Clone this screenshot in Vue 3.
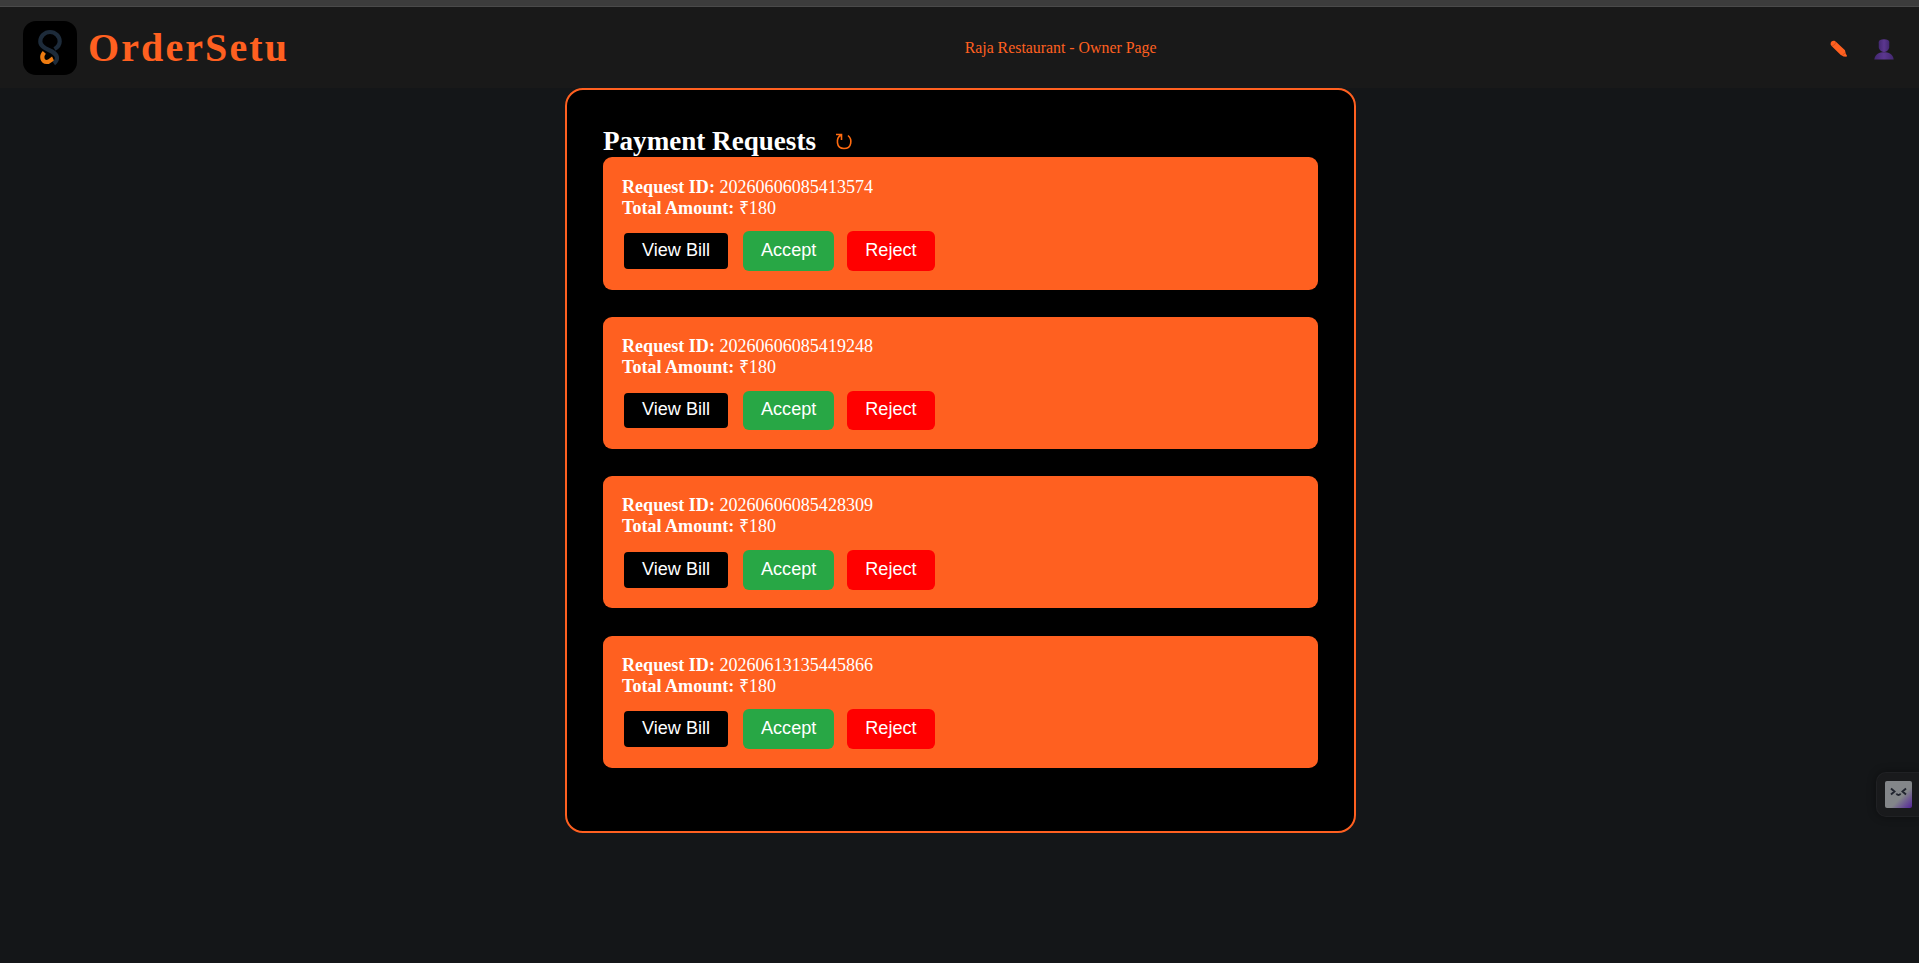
<template>
  <div class="page">
    <div class="top-strip"></div>
    <header class="navbar">
      <div class="brand">
        <svg class="logo" viewBox="0 0 54 54">
          <rect width="54" height="54" rx="13" fill="#000" />
          <path d="M31.500 28C35 26 36.700 23.500 36.700 20.500a9.700 9.500 0 1 0-19.400 0C17.300 29.500 34 28.500 34 37Q34 40 30.800 42.500" fill="none" stroke="#1d2b3a" stroke-width="4.200" />
          <path d="M21.300 31.300C17.500 35.500 19.500 41 23.500 41c3.500 0 4.500-2.500 6.500-3.500" fill="none" stroke="#ee7b10" stroke-width="4.200" />
        </svg>
        <h1>OrderSetu</h1>
      </div>
      <div class="page-name">Raja Restaurant - Owner Page</div>
      <div class="nav-icons">
        <svg class="pencil" viewBox="0 0 18 18">
          <path d="M.6 4.500Q.4 2.500 1.500 1.500T4.500.8L6.200 2 15 10.200 15.700 13.500 17 15.800 16.500 16.800 13.500 16.500 10.500 14.800 1.800 6.200Z" fill="#ff6020" />
          <path d="M2 6.200Q5.200 5 6.200 2M12.800 15.200Q13.500 13.500 15.400 12.800" fill="none" stroke="#b5431b" stroke-width=".6" />
        </svg>
        <svg class="user" viewBox="0 0 20 21">
          <defs>
            <linearGradient id="userFill" x1="0" x2="1">
              <stop offset="0" stop-color="#432871" />
              <stop offset=".5" stop-color="#5c3790" />
              <stop offset="1" stop-color="#432871" />
            </linearGradient>
          </defs>
          <path d="M4.700 3Q5 .3 10 .3T15.300 3L15.200 9Q13.500 13 10 13T4.800 9Z" fill="url(#userFill)" />
          <path d="M.3 20.500C1 15 5.500 13.300 10 13.300S19 15 19.700 20.500Z" fill="url(#userFill)" />
        </svg>
      </div>
    </header>

    <main class="panel">
      <div class="panel-title">
        <h2>Payment Requests</h2>
        <svg class="refresh" viewBox="0 0 18 18">
          <path d="M1 1.500H6.500V7M6 2C.8 5 .8 15.500 9 15.500S17.300 6 13 2.500" fill="none" stroke="#ff6b10" stroke-width="1.600" />
        </svg>
      </div>
      <section v-for="req in requests" :key="req.id" class="request">
        <div><b>Request ID:</b> {{ req.id }}</div>
        <div><b>Total Amount:</b> ₹{{ req.amount }}</div>
        <div class="actions">
          <button class="view">View Bill</button>
          <button class="accept">Accept</button>
          <button class="reject">Reject</button>
        </div>
      </section>
    </main>

    <div class="side-widget">
      <svg viewBox="0 0 27 27">
        <defs>
          <linearGradient id="faceFill" x1="0" y1="0" x2="1" y2="1">
            <stop offset=".6" stop-color="#838689" />
            <stop offset="1" stop-color="#53229a" />
          </linearGradient>
        </defs>
        <rect width="27" height="27" rx="2" fill="url(#faceFill)" />
        <path d="M6 7.500 9.500 10.500 6 13.500M21 7.500 17.500 10.500 21 13.500M11.500 12.500Q12 14 13.500 14T15.500 12.500" fill="none" stroke="#20242e" stroke-width="1.900" />
      </svg>
    </div>
  </div>
</template>

<script setup>
import { ref } from 'vue'

const requests = ref([
  { id: '20260606085413574', amount: 180 },
  { id: '20260606085419248', amount: 180 },
  { id: '20260606085428309', amount: 180 },
  { id: '20260613135445866', amount: 180 }
])
</script>

<style>
body {
  background: #141618;
}
</style>

<style scoped>
.page {
  height: 963px;
  overflow: hidden;
  font-family: "Liberation Serif", "Times New Roman", serif;
  color: #fff;
}

h1,
h2 {
  margin: 0;
}

.top-strip {
  height: 7px;
  box-sizing: border-box;
  background: #3c3c3c;
  border-bottom: 1px solid #4a4a4a;
}

.navbar {
  height: 81px;
  box-sizing: border-box;
  padding: 0 25px 0 23px;
  display: flex;
  align-items: center;
  justify-content: space-between;
  background: #191919;
  color: #ff6020;
}

.brand {
  display: flex;
  align-items: center;
  gap: 11px;
}

.logo {
  width: 54px;
  height: 54px;
}

.brand h1 {
  font-size: 40px;
  line-height: 54px;
  letter-spacing: 2.1px;
}

.page-name {
  padding: 1px 0 0 2px;
  font-size: 15.85px;
}

.nav-icons {
  display: flex;
  align-items: center;
  gap: 26px;
  padding-top: 3px;
}

.pencil {
  width: 18px;
  height: 18px;
}

.user {
  width: 20px;
  height: 21px;
}

.panel {
  width: 791px;
  height: 745px;
  box-sizing: border-box;
  margin: 0 0 0 565px;
  padding: 36px;
  background: #000;
  border: 2px solid #ff6020;
  border-radius: 18px;
}

.panel-title {
  height: 31.3px;
  display: flex;
  align-items: center;
  gap: 19px;
}

.panel-title h2 {
  font-size: 27.1px;
  line-height: 31px;
}

.refresh {
  width: 18px;
  height: 18px;
}

.request {
  height: 132.3px;
  box-sizing: border-box;
  margin-bottom: 27.15px;
  padding: 19.25px 19px;
  background: #ff6020;
  border-radius: 9px;
  font-size: 18.08px;
  line-height: 21px;
}

.actions {
  display: flex;
  align-items: center;
  gap: 13px;
  margin-top: 12.6px;
}

button {
  height: 39.7px;
  padding: 0 18px 1px;
  border: none;
  border-radius: 6px;
  font: 18.08px "Liberation Sans", Arial, sans-serif;
  color: #fff;
}

.view {
  background: #000;
  border: 2px solid #ff6020;
}

.accept {
  background: #28a745;
}

.reject {
  background: #f00;
}

.side-widget {
  position: fixed;
  right: 0;
  top: 772px;
  width: 43px;
  height: 45px;
  box-sizing: border-box;
  padding: 8px 0 0 8px;
  background: #191a1c;
  border: 1px solid #202124;
  border-right: none;
  border-radius: 10px 0 0 10px;
  box-shadow: 0 0 8px #0006;
}

.side-widget svg {
  display: block;
  width: 27px;
  height: 27px;
}
</style>
